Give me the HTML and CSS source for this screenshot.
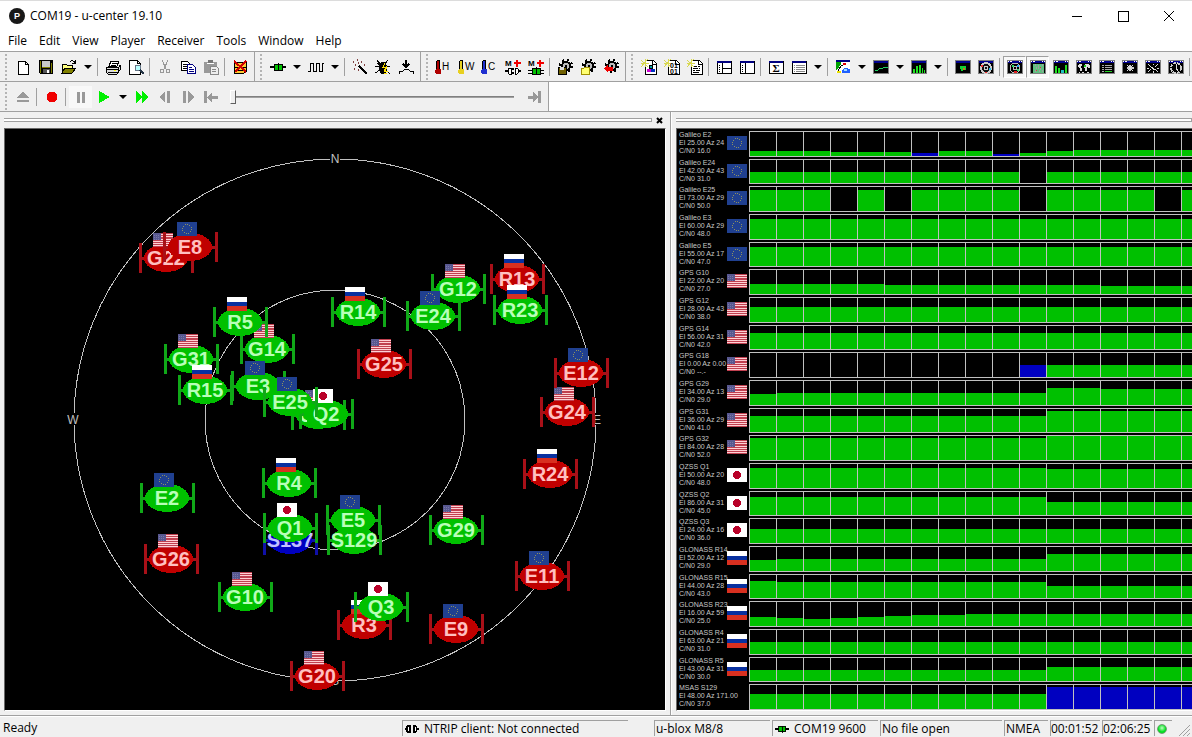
FILE: index.html
```html
<!DOCTYPE html>
<html lang="en">
<head>
  <meta charset="utf-8">
  <title>COM19 - u-center 19.10</title>
  <link rel="stylesheet" href="styles.css">
</head>
<body>
  <!-- icon and flag sprite -->
  <svg class="sprite" aria-hidden="true">
    <symbol id="new" viewBox="0 0 16 16"><path d="M3 2h7l3 3v10h-10z" fill="#fff" stroke="#000"/><path d="M10 2v3h3" fill="none" stroke="#000"/></symbol>
    <symbol id="save" viewBox="0 0 16 16"><path d="M1 1h14v14H2l-1-1z" fill="#000"/><path d="M2 2h1v12H2zM13 4h1v10h-1zM4 8h8v1H4z" fill="#808000"/><path d="M4 2h8v6H4z" fill="#c8c8c8"/><path d="M5 10h7v4H5z" fill="#555"/><path d="M9 11h2v3H9z" fill="#fff"/></symbol>
    <symbol id="open" viewBox="0 0 16 16"><path d="M1 14V5h4l1 1h5v3" fill="#ffff80" stroke="#000"/><path d="M1 14l3-5h11l-4 5z" fill="#808000" stroke="#000"/><path d="M9 3q3-3 5 1M14 1v3h-3" fill="none" stroke="#000"/></symbol>
    <symbol id="print" viewBox="0 0 16 16"><path d="M4 7l2-5h8l-2 5z" fill="#fff" stroke="#000"/><path d="M7 4h5M6 6h5" stroke="#000"/><path d="M1 8h13l1-2v5l-3 4H3l-2-2z" fill="#ddd" stroke="#000"/><path d="M1 10h12M3 13h9M13 8v5" stroke="#000"/><path d="M9 11h2v1H9z" fill="#ff0"/></symbol>
    <symbol id="preview" viewBox="0 0 16 16"><path d="M1 1h8l3 3v11H1z" fill="#fff" stroke="#000"/><path d="M9 1v3h3" fill="none" stroke="#000"/><circle cx="10" cy="9" r="3" fill="#bff" stroke="#678"/><path d="M12 11l4 4" stroke="#234" stroke-width="2"/></symbol>
    <symbol id="cut" viewBox="0 0 16 16"><path d="M5 1l4 9M11 1L7 10" stroke="#999" fill="none"/><circle cx="5" cy="12" r="2" fill="none" stroke="#999"/><circle cx="11" cy="12" r="2" fill="none" stroke="#999"/></symbol>
    <symbol id="copy" viewBox="0 0 16 16"><path d="M1 2h6l2 2v7H1z" fill="#fff" stroke="#000"/><path d="M3 5h4M3 7h4M3 9h4" stroke="#000"/><path d="M7 5h5l3 3v6H7z" fill="#fff" stroke="#000080"/><path d="M9 8h3M9 10h5M9 12h5" stroke="#000080"/></symbol>
    <symbol id="paste" viewBox="0 0 16 16"><path d="M1 3h13v11H1z" fill="#999"/><path d="M5 1h5v3H5z" fill="#777"/><path d="M4 4h7" stroke="#fff"/><path d="M7 7h6l2 2v6H7z" fill="#eee" stroke="#888"/><path d="M9 10h4M9 12h4" stroke="#888"/></symbol>
    <symbol id="clear" viewBox="0 0 16 16"><path d="M2 5l2-2h10v10l-2 1H2z" fill="#ffc830" stroke="#000"/><path d="M2 8h12M2 11h12" stroke="#000"/><path d="M2 2l12 11M14 2L3 13" stroke="#d00000" stroke-width="2"/></symbol>
    <symbol id="plug" viewBox="0 0 16 16"><path d="M0 8h16" stroke="#000" stroke-width="2"/><rect x="4" y="5" width="8" height="6" fill="#00c000" stroke="#000"/><path d="M8 4v8" stroke="#000"/></symbol>
    <symbol id="wave" viewBox="0 0 16 16"><path d="M0 12h2V4h3v8h3V4h3v8h3V4h2" fill="none" stroke="#000"/></symbol>
    <symbol id="wand" viewBox="0 0 16 16"><path d="M7 7l8 8" stroke="#000" stroke-width="2"/><path d="M1 3h1M5 1h1M9 3h1M3 6h1M2 10h1M6 11h1M12 6h1M6 4h1" stroke="#804040" stroke-width="2"/></symbol>
    <symbol id="bug" viewBox="0 0 16 16"><path d="M2 1l3 4M13 1l-3 4M0 7h5M0 14l5-3M15 15l-4-4M15 7h-4M2 4l4 3" stroke="#000"/><ellipse cx="8" cy="9" rx="4" ry="6" fill="#000"/><path d="M10 4l-2 4h3l-2 4M12 7l-2 5h3M9 14h3" stroke="#ffe000" stroke-width="1" fill="none"/></symbol>
    <symbol id="download" viewBox="0 0 16 16"><path d="M8 1v7M5 5l3 3 3-3" stroke="#000" stroke-width="2" fill="none"/><path d="M1 15v-3h4l2-2h3l2 2h3v3" fill="none" stroke="#000"/></symbol>
    <symbol id="thermo" viewBox="0 0 8 16"><path d="M2 2l1-1h2l1 1v10H2z" fill="#000"/><path d="M3 2h2v10H3z" fill="currentColor"/><path d="M2 10h4l1 1v3l-1 1H2l-1-1v-3z" fill="currentColor"/></symbol>
    <symbol id="plugs" viewBox="0 0 16 16"><path d="M0 12h3M13 12h3M6 10h3M6 14h3" stroke="#000" stroke-width="2"/><path d="M6 9H4L3 10v4l1 1h2zM10 9h2l1 1v4l-1 1h-2z" fill="#fff" stroke="#000"/><path d="M9 4h7M12 1v7" stroke="#f00000" stroke-width="2"/></symbol>
    <symbol id="plugs-on" viewBox="0 0 16 16"><path d="M0 11h16M0 14h16" stroke="#000"/><rect x="4" y="9" width="8" height="6" fill="#00c000" stroke="#000"/><path d="M8 8v8" stroke="#000"/><path d="M9 4h7M12 1v7" stroke="#f00000" stroke-width="2"/></symbol>
    <symbol id="gear" viewBox="0 0 16 16"><circle cx="9" cy="7" r="6" fill="none" stroke="#000" stroke-width="2" stroke-dasharray="2 2.7"/><circle cx="9" cy="7" r="4" fill="#bbb" stroke="#000" stroke-width="2"/><circle cx="9" cy="7" r="1" fill="#fff" stroke="#000"/></symbol>
    <symbol id="g-save" viewBox="0 0 16 16"><use href="#gear"/><path d="M1 8h8v7H1z" fill="#706000" stroke="#000"/><path d="M3 8h4v3H3z" fill="#ddd"/></symbol>
    <symbol id="g-open" viewBox="0 0 16 16"><use href="#gear"/><path d="M1 9h3l1-1h4v7H1z" fill="#ffff70" stroke="#a09000"/></symbol>
    <symbol id="g-back" viewBox="0 0 16 16"><use href="#gear"/><path d="M1 9l4-4v3h5v4H5v2z" fill="#f00000"/></symbol>
    <symbol id="page" viewBox="0 0 16 16"><path d="M4 1h8l3 3v11H4z" fill="#fff" stroke="#000"/><path d="M11 1v4h4" fill="none" stroke="#000"/><path d="M0 1l7 7M7 0L0 8M4 0v8M0 4h8" stroke="#d8d850"/></symbol>
    <symbol id="p-config" viewBox="0 0 16 16"><use href="#page"/><path d="M8 6h3v3H8z" fill="#00a0a0" stroke="#000"/><path d="M6 10h4v3H6z" fill="#d000d0"/><path d="M10 10h4v3h-4z" fill="#0030c0"/></symbol>
    <symbol id="p-text" viewBox="0 0 16 16"><use href="#page"/><path d="M7 7h3M11 7h2M6 9h5M12 9h1M6 11h2M9 11h4M6 13h6" stroke="#000"/></symbol>
    <symbol id="blank" viewBox="0 0 16 16"><path d="M1 2h14v12H1z" fill="#fff" stroke="#000"/><path d="M1 2h14v2H1z" fill="#000080"/></symbol>
    <symbol id="side" viewBox="0 0 16 16"><use href="#blank"/><path d="M6 4v10M3 6h1M3 8h1M3 10h1M3 12h1" stroke="#000"/></symbol>
    <symbol id="split" viewBox="0 0 16 16"><use href="#side"/><path d="M6 9h9" stroke="#000"/></symbol>
    <symbol id="list" viewBox="0 0 16 16"><use href="#blank"/><path d="M3 6h1M5 6h9M3 8h1M5 8h9M3 10h1M5 10h9M3 12h1M5 12h9" stroke="#888"/></symbol>
    <symbol id="map" viewBox="0 0 16 16"><path d="M1 2h14v12H1z" fill="#fff"/><path d="M1 2h5v3l-4 6H1z" fill="#00a000"/><path d="M7 14q0-5 3-5l5 1v4z" fill="#2060ff"/><path d="M9 10h3v2H9z" fill="#a0e0ff"/><path d="M3 12q3-7 8-7" fill="none" stroke="#000"/><path d="M8 4h3v2H8z" fill="#e00000"/><path d="M2 12h4v2H2z" fill="#e8e000"/><path d="M1 1h14v2H1z" fill="#000080"/></symbol>
    <symbol id="win" viewBox="0 0 16 16"><path d="M0 1h16v14H0z" fill="#808080"/><path d="M1 2h14v12H1z" fill="#000"/><path d="M1 2h14v2H1z" fill="#000090"/></symbol>
    <symbol id="line" viewBox="0 0 16 16"><use href="#win"/><path d="M2 11h3l2-2 2 1 2-2h4" stroke="#20d060" fill="none"/></symbol>
    <symbol id="bars" viewBox="0 0 16 16"><use href="#win"/><path d="M2 10h2v4H2zM5 7h2v7H5zM8 6h2v8H8zM11 9h1v5h-1zM13 11h1v3h-1z" fill="#20e020"/></symbol>
    <symbol id="dot" viewBox="0 0 16 16"><use href="#win"/><path d="M5 7h6v4H8v1H6z" fill="#10d030"/><path d="M8 9h2v2H8z" fill="#d07020"/></symbol>
    <symbol id="target" viewBox="0 0 16 16"><use href="#win"/><circle cx="8" cy="9" r="5" fill="#111" stroke="#ccc" stroke-width="2"/><circle cx="8" cy="9" r="2" fill="none" stroke="#ccc"/><path d="M3 6h2v2H3zM7 13h2v1H7z" fill="#f03030"/><path d="M11 9h2v2h-2z" fill="#20c0f0"/></symbol>
    <symbol id="view" viewBox="0 0 16 16"><use href="#win"/><path d="M1 2h1v1H1zM3 2h2v1H3zM12 2h1v1h-1zM14 2h1v1h-1z" fill="#fff"/></symbol>
    <symbol id="v-sky" viewBox="0 0 16 16"><use href="#view"/><circle cx="8" cy="9" r="5" fill="none" stroke="#bbb"/><circle cx="8" cy="9" r="2" fill="none" stroke="#bbb"/><path d="M5 6h2v2H5zM10 10h2v2h-2z" fill="#20e060"/><path d="M7 12h3v2H7z" fill="#e02020"/><path d="M10 6h2v2h-2z" fill="#20a0f0"/></symbol>
    <symbol id="v-hist" viewBox="0 0 16 16"><use href="#view"/><path d="M3 5h11v9H3z" fill="#60c080"/><path d="M5 6h1M8 7h1M12 6h1M6 9h1M10 10h1M5 12h1M9 12h1M12 12h1M8 9h1" stroke="#a0a0a0" stroke-width="2"/><path d="M10 8h1v1h-1zM6 11h1v1H6z" fill="#d04040"/></symbol>
    <symbol id="v-bars" viewBox="0 0 16 16"><use href="#view"/><path d="M2 7h2v7H2zM5 9h2v5H5zM12 6h2v8h-2z" fill="#20e020"/><path d="M8 11h3v3H8z" fill="#20c0c0"/></symbol>
    <symbol id="v-world" viewBox="0 0 16 16"><use href="#view"/><path d="M2 6h1V5h3v2H5v2h1v3H4V9H3V8H2zM8 6h1V5h4v1h1v3h-2V8h-1v4H9V9H8z" fill="#ddd"/><path d="M8 6h2v2H8z" fill="#20d020"/><path d="M3 13h1M6 13h2M11 13h2" stroke="#ddd"/></symbol>
    <symbol id="v-text" viewBox="0 0 16 16"><use href="#view"/><path d="M3 6h2M6 6h7M3 8h2M6 8h7M3 10h2M6 10h7M3 12h2" stroke="#aaa"/><path d="M6 12h7" stroke="#20d020"/></symbol>
    <symbol id="v-compass" viewBox="0 0 16 16"><use href="#view"/><path d="M8 4l1 4 5 1-5 1-1 4-1-4-5-1 5-1z" fill="#ccc"/><path d="M5 6l6 6M11 6l-6 6" stroke="#ddd"/></symbol>
    <symbol id="v-dev" viewBox="0 0 16 16"><use href="#view"/><path d="M3 5l3 3M13 5l-3 3M3 13l3-3M13 13l-3-3M8 5v1M8 12v2M2 9h2M12 9h2M6 8l4 3" stroke="#ddd"/></symbol>
    <symbol id="v-clock" viewBox="0 0 16 16"><use href="#view"/><circle cx="8" cy="9" r="5" fill="none" stroke="#ccc" stroke-width="2" stroke-dasharray="3 1"/><path d="M8 5v4l2 3" stroke="#ddd" fill="none"/></symbol>
    <symbol id="eject" viewBox="0 0 16 16"><path d="M8 2l6 7H2zM2 11h12v2H2z" fill="#999"/></symbol>
    <symbol id="record" viewBox="0 0 16 16"><circle cx="8" cy="8" r="5.5" fill="#f00000"/></symbol>
    <symbol id="pause" viewBox="0 0 16 16"><path d="M4 3h3v11H4zM9 3h3v11H9z" fill="#999"/></symbol>
    <symbol id="play" viewBox="0 0 16 16"><path d="M3 2l11 6-11 6z" fill="#00f000"/></symbol>
    <symbol id="ff" viewBox="0 0 16 16"><path d="M2 2l6 6-6 6zM8 2l6 6-6 6z" fill="#00f000"/></symbol>
    <symbol id="step-back" viewBox="0 0 16 16"><path d="M8 2v12L2 8zM10 2h3v12h-3z" fill="#999"/></symbol>
    <symbol id="step" viewBox="0 0 16 16"><path d="M3 2h3v12H3zM8 2l6 6-6 6z" fill="#999"/></symbol>
    <symbol id="first" viewBox="0 0 16 16"><path d="M1 2h3v12H1zM4 8l5-5v4h6v3H9v4z" fill="#999"/></symbol>
    <symbol id="last" viewBox="0 0 16 16"><path d="M12 2h3v12h-3zM12 8L7 3v4H2v3h5v4z" fill="#999"/></symbol>
    <symbol id="unplug" viewBox="0 0 16 16"><path d="M0 8h3M13 8h3M5 6h2M5 10h2" stroke="#000" stroke-width="2"/><path d="M6 4H4L2 6v4l2 2h2zM10 4h2l1 2v4l-1 2h-2z" fill="#fff" stroke="#000" stroke-width="2"/></symbol>
    <symbol id="us" viewBox="0 0 20 14"><path d="M0 0h20v14H0z" fill="#ffd0d4"/><path d="M0 0h20v1H0zM0 2h20v1H0zM0 4h20v2H0zM0 7h20v1H0zM0 9h20v1H0zM0 11h20v1H0zM0 13h20v1H0z" fill="#c04050"/><path d="M0 0h8v7H0z" fill="#585890"/><path d="M1 2h6M1 4h6M1 6h6" stroke="#7878a8" stroke-dasharray="1 1"/></symbol>
    <symbol id="eu" viewBox="0 0 20 14"><path d="M0 0h20v14H0z" fill="#204090"/><circle cx="10" cy="7" r="4.5" fill="none" stroke="#8c9060" stroke-dasharray="1 1.3"/></symbol>
    <symbol id="ru" viewBox="0 0 20 14"><path d="M0 0h20v5H0z" fill="#fff"/><path d="M0 5h20v5H0z" fill="#0830a0"/><path d="M0 9h20v5H0z" fill="#d83020"/></symbol>
    <symbol id="jp" viewBox="0 0 20 14"><path d="M0 0h20v14H0z" fill="#fff"/><circle cx="10" cy="7" r="4" fill="#b80028"/></symbol>
  </svg>

  <header class="titlebar">
    <svg class="logo" viewBox="0 0 16 16"><circle cx="8" cy="8" r="8" fill="#181818"/><text x="8" y="11" text-anchor="middle">P</text></svg>
    <span class="title">COM19 - u-center 19.10</span>
    <button class="win-btn" aria-label="Minimize"><svg viewBox="0 0 12 12"><path d="M1 6h10"/></svg></button>
    <button class="win-btn" aria-label="Maximize"><svg viewBox="0 0 12 12"><path d="M1 1h10v10H1z"/></svg></button>
    <button class="win-btn" aria-label="Close"><svg class="smooth" viewBox="0 0 12 12"><path d="M1 1l10 10M11 1L1 11"/></svg></button>
  </header>

  <nav class="menubar">
    <a href="#">File</a><a href="#">Edit</a><a href="#">View</a><a href="#">Player</a><a href="#">Receiver</a><a href="#">Tools</a><a href="#">Window</a><a href="#">Help</a>
  </nav>

  <div class="toolbars">
    <div class="band">
      <button class="tool" aria-label="New"><svg><use href="#new"/></svg></button>
      <button class="tool" aria-label="Save"><svg><use href="#save"/></svg></button>
      <button class="tool" aria-label="Open"><svg><use href="#open"/></svg></button>
      <button class="drop" aria-label="Open recent"></button>
      <span class="sep"></span>
      <button class="tool" aria-label="Print"><svg><use href="#print"/></svg></button>
      <button class="tool" aria-label="Print preview"><svg><use href="#preview"/></svg></button>
      <span class="sep"></span>
      <button class="tool" aria-label="Cut"><svg><use href="#cut"/></svg></button>
      <button class="tool" aria-label="Copy"><svg><use href="#copy"/></svg></button>
      <button class="tool" aria-label="Paste"><svg><use href="#paste"/></svg></button>
      <span class="sep"></span>
      <button class="tool" aria-label="Clear"><svg><use href="#clear"/></svg></button>
    </div>
    <div class="band">
      <button class="tool" aria-label="Connect"><svg><use href="#plug"/></svg></button>
      <button class="drop" aria-label="Port"></button>
      <button class="tool" aria-label="Baudrate"><svg><use href="#wave"/></svg></button>
      <button class="drop" aria-label="Select baudrate"></button>
      <span class="sep"></span>
      <button class="tool" aria-label="Autobauding"><svg><use href="#wand"/></svg></button>
      <button class="tool" aria-label="Debug messages"><svg><use href="#bug"/></svg></button>
      <button class="tool" aria-label="Firmware update"><svg><use href="#download"/></svg></button>
    </div>
    <div class="band">
      <button class="tool thermo hot" aria-label="Hotstart"><svg><use href="#thermo"/></svg>H</button>
      <button class="tool thermo warm" aria-label="Warmstart"><svg><use href="#thermo"/></svg>W</button>
      <button class="tool thermo cold" aria-label="Coldstart"><svg><use href="#thermo"/></svg>C</button>
      <button class="tool" aria-label="Multi GNSS"><svg viewBox="0 0 16 16"><use href="#plugs"/><text class="mark" x="0" y="7">M</text></svg></button>
      <button class="tool" aria-label="Multi GNSS connect"><svg viewBox="0 0 16 16"><use href="#plugs-on"/><text class="mark" x="0" y="7">M</text></svg></button>
      <span class="sep"></span>
      <button class="tool" aria-label="Save config"><svg><use href="#g-save"/></svg></button>
      <button class="tool" aria-label="Load config"><svg><use href="#g-open"/></svg></button>
      <button class="tool" aria-label="Revert config"><svg><use href="#g-back"/></svg></button>
    </div>
    <div class="band fill">
      <button class="tool" aria-label="Packet console"><svg><use href="#p-config"/></svg></button>
      <button class="tool" aria-label="Binary console"><svg viewBox="0 0 16 16"><use href="#page"/><text class="bits" x="6" y="9">01</text><text class="bits" x="6" y="15">01</text></svg></button>
      <button class="tool" aria-label="Text console"><svg><use href="#p-text"/></svg></button>
      <span class="sep"></span>
      <button class="tool" aria-label="Messages view"><svg><use href="#split"/></svg></button>
      <button class="tool" aria-label="Configuration view"><svg><use href="#side"/></svg></button>
      <span class="sep"></span>
      <button class="tool" aria-label="Statistic view"><svg viewBox="0 0 16 16"><use href="#blank"/><text class="sigma" x="8" y="13" text-anchor="middle">Σ</text></svg></button>
      <button class="tool" aria-label="Table view"><svg><use href="#list"/></svg></button>
      <button class="drop" aria-label="Table list"></button>
      <span class="sep"></span>
      <button class="tool" aria-label="Map view"><svg><use href="#map"/></svg></button>
      <button class="drop" aria-label="Map list"></button>
      <button class="tool" aria-label="Chart view"><svg><use href="#line"/></svg></button>
      <button class="drop" aria-label="Chart list"></button>
      <button class="tool" aria-label="Histogram view"><svg><use href="#bars"/></svg></button>
      <button class="drop" aria-label="Histogram list"></button>
      <span class="sep"></span>
      <button class="tool" aria-label="Camera view"><svg><use href="#dot"/></svg></button>
      <button class="tool" aria-label="Deviation map"><svg><use href="#target"/></svg></button>
      <span class="sep"></span>
      <button class="tool pressed" aria-label="Satellite position"><svg><use href="#v-sky"/></svg></button>
      <button class="tool pressed" aria-label="Satellite level history"><svg><use href="#v-hist"/></svg></button>
      <button class="tool" aria-label="Satellite level"><svg><use href="#v-bars"/></svg></button>
      <button class="tool" aria-label="World position"><svg><use href="#v-world"/></svg></button>
      <button class="tool" aria-label="Data"><svg><use href="#v-text"/></svg></button>
      <button class="tool" aria-label="Compass"><svg><use href="#v-compass"/></svg></button>
      <button class="tool" aria-label="Deviation"><svg><use href="#v-dev"/></svg></button>
      <button class="tool" aria-label="Clock"><svg><use href="#v-clock"/></svg></button>
      <span class="sep"></span>
    </div>
  </div>

  <div class="toolbars player">
    <div class="band">
      <button class="tool" aria-label="Eject"><svg><use href="#eject"/></svg></button>
      <span class="sep"></span>
      <button class="tool" aria-label="Record"><svg><use href="#record"/></svg></button>
      <span class="sep"></span>
      <button class="tool paused" aria-label="Pause"><svg><use href="#pause"/></svg></button>
      <button class="tool" aria-label="Play"><svg><use href="#play"/></svg></button>
      <button class="drop" aria-label="Play speed"></button>
      <button class="tool" aria-label="Fast forward"><svg><use href="#ff"/></svg></button>
      <button class="tool" aria-label="Step back"><svg><use href="#step-back"/></svg></button>
      <button class="tool" aria-label="Step forward"><svg><use href="#step"/></svg></button>
      <button class="tool" aria-label="Go to start"><svg><use href="#first"/></svg></button>
      <input class="seek" type="range" min="0" max="100" value="0" aria-label="Position">
      <button class="tool" aria-label="Go to end"><svg><use href="#last"/></svg></button>
    </div>
  </div>

  <main class="docks">
    <section class="dock">
      <div class="grip"><span class="grip-bar"></span><button class="close" aria-label="Close view"><svg viewBox="0 0 7 7"><path d="M1 1l5 5M6 1L1 6"/></svg></button></div>
      <div class="view">
        <svg class="sky" viewBox="0 0 660 581">
          <g class="rings">
            <circle cx="330" cy="291" r="261"/>
            <circle cx="330" cy="291" r="130"/>
          </g>
          <g class="compass">
            <path d="M325 24h10v12h-10zM62 284h12v12H62zM588 284h8v12h-8z"/>
            <text x="330" y="34">N</text>
            <text x="68" y="295">W</text>
            <text x="592" y="295">E</text>
            <text x="330" y="556">S</text>
          </g>
          <g id="satellites"></g>
        </svg>
      </div>
    </section>
    <section class="dock">
      <div class="grip"><span class="grip-bar"></span></div>
      <div class="view history" id="history"></div>
    </section>
  </main>

  <footer class="statusbar">
    <span class="ready">Ready</span>
    <span class="pane ntrip"><svg><use href="#unplug"/></svg>NTRIP client: Not connected</span>
    <span class="pane receiver">u-blox M8/8</span>
    <span class="pane port"><svg><use href="#plug"/></svg>COM19 9600</span>
    <span class="pane file">No file open</span>
    <span class="pane proto">NMEA</span>
    <span class="pane time">00:01:52</span>
    <span class="pane time">02:06:25</span>
    <span class="pane led"><i></i></span>
    <svg class="resize" viewBox="0 0 12 12"><path d="M1 12L12 1M5 12l7-7M9 12l3-3"/></svg>
  </footer>

  <script src="script.js"></script>
</body>
</html>
```

FILE: styles.css
```css
* {
  box-sizing: border-box;
}
html, body {
  height: 100%;
}
body {
  margin: 0;
  display: flex;
  flex-direction: column;
  overflow: hidden;
  background: #f0f0f0;
  color: #000;
  font: 12px/16px "Open Sans", "Noto Sans", sans-serif;
}
button {
  padding: 0;
  border: 0;
  background: none;
  font: inherit;
  color: inherit;
}
svg {
  display: block;
  shape-rendering: crispEdges;
}
.sprite {
  position: absolute;
  width: 0;
  height: 0;
}

/* title and menu */
.titlebar {
  display: flex;
  align-items: center;
  height: 31px;
  padding-left: 9px;
  background: #fff;
  border-top: 1px solid #dcdcdc;
}
.logo {
  width: 16px;
  height: 16px;
  shape-rendering: auto;
}
.logo text {
  fill: #fff;
  font: bold 9px "Liberation Sans", sans-serif;
}
.title {
  flex: 1;
  margin-left: 5px;
}
.win-btn {
  width: 46px;
  height: 30px;
  display: flex;
  align-items: center;
  justify-content: center;
}
.win-btn svg {
  width: 12px;
  height: 12px;
  fill: none;
  stroke: #000;
}
.win-btn .smooth {
  shape-rendering: auto;
}
.menubar {
  display: flex;
  gap: 12px;
  height: 20px;
  padding: 2px 8px;
  background: #fff;
}
.menubar a {
  color: #000;
  text-decoration: none;
}

/* toolbars */
.toolbars {
  display: flex;
  height: 30px;
  border-top: 1px solid #a0a0a0;
  background: #fff;
}
.band {
  flex: none;
  display: flex;
  align-items: center;
  padding: 0 3px 0 11px;
  border-right: 1px solid #a0a0a0;
  background: linear-gradient(#b4b4b4 50%, transparent 50%) 5px 6px / 2px 4px repeat-y, #f0f0f0;
}
.band.fill {
  flex: 1 0 0;
  min-width: 0;
  overflow: hidden;
  border-right: 0;
}
.tool {
  flex: none;
  width: 23px;
  height: 22px;
  display: flex;
  align-items: center;
  justify-content: center;
}
.tool svg {
  flex: none;
  width: 16px;
  height: 16px;
}
.pressed {
  background: #f8f8f8;
  border: 1px solid #a0a0a0;
  border-right-color: #fff;
  border-bottom-color: #fff;
}
.paused {
  background: #f8f8f8;
}
.thermo {
  justify-content: flex-start;
  font: 10px/16px "Liberation Sans", sans-serif;
}
.tool.thermo svg {
  width: 8px;
  margin-left: 2px;
}
.hot svg {
  color: #b00000;
}
.warm svg {
  color: #e8d020;
}
.cold svg {
  color: #2030d0;
}
.mark {
  font: bold 8px "Liberation Sans", sans-serif;
}
.bits {
  font: bold 7px "Liberation Sans", sans-serif;
}
.sigma {
  font: bold 11px "Liberation Serif", serif;
}
.drop {
  flex: none;
  width: 15px;
  height: 22px;
  display: flex;
  align-items: center;
  justify-content: center;
}
.drop::before {
  content: "";
  border: 4px solid transparent;
  border-top-color: #000;
  border-bottom: 0;
}
.sep {
  flex: none;
  width: 6px;
  height: 18px;
  background: linear-gradient(#a0a0a0, #a0a0a0) 2px 0 / 1px 100% no-repeat;
}
.seek {
  appearance: none;
  width: 300px;
  height: 16px;
  margin: 0;
  padding: 0 8px;
  background: none;
}
.seek::-webkit-slider-runnable-track {
  height: 2px;
  background: #808080;
  border-bottom: 1px solid #a0a0a0;
}
.seek::-webkit-slider-thumb {
  appearance: none;
  width: 6px;
  height: 14px;
  margin-top: -6px;
  background: #f0f0f0;
  border: 1px solid #fff;
  border-right-color: #606060;
  border-bottom-color: #606060;
}

/* docked views */
.docks {
  flex: 1;
  min-height: 0;
  display: grid;
  grid-template-columns: minmax(0, 671fr) minmax(0, 521fr);
  border-top: 1px solid #a0a0a0;
}
.dock {
  display: flex;
  flex-direction: column;
  min-height: 0;
  padding: 0 4px 4px;
  border-right: 1px solid #a0a0a0;
}
.dock + .dock {
  padding-right: 0;
  border-right: 0;
  border-left: 1px solid #fff;
}
.grip {
  flex: none;
  display: flex;
  align-items: center;
  height: 16px;
}
.grip-bar {
  flex: 1;
  height: 4px;
  border: 1px solid #a0a0a0;
  border-left: 0;
  background: #fff;
}
.close {
  width: 14px;
  height: 12px;
  display: flex;
  align-items: center;
  justify-content: center;
}
.close svg {
  width: 7px;
  height: 7px;
  stroke: #000;
  stroke-width: 2;
  shape-rendering: auto;
}
.view {
  flex: 1;
  min-height: 0;
  background: #000;
  border: 1px solid #fff;
  border-top-color: #696969;
  border-left-color: #696969;
}

/* sky plot */
.sky {
  width: 100%;
  height: 100%;
}
.rings {
  fill: none;
  stroke: #c0c0c0;
}
.compass path {
  fill: #000;
}
.compass text {
  fill: #c0c0c0;
  font: 12px "Liberation Sans", sans-serif;
  text-anchor: middle;
}
.sat path {
  stroke-width: 3;
  fill: none;
}
.sat text {
  font: bold 20px "Liberation Sans", sans-serif;
  text-anchor: middle;
}
.used {
  fill: #00c000;
  stroke: #10a818;
}
.unused {
  fill: #c00000;
  stroke: #a81018;
}
.tracked {
  fill: #0000c0;
  stroke: #1010a8;
}
.sat ellipse, .sat text {
  stroke: none;
}
.used text {
  fill: #b8ffb8;
}
.unused text {
  fill: #ffc0c0;
}
.tracked text {
  fill: #c0c0ff;
}

/* signal history */
.history {
  display: flex;
  flex-direction: column;
  overflow: hidden;
  border-right: 0;
}
.signal {
  flex: 1;
  min-height: 0;
  display: flex;
  padding: 2px 0 0 2px;
}
.info {
  position: relative;
  flex: none;
  width: 70px;
  margin: 0;
  color: #c8c8c8;
  font: 7px/8px "Liberation Sans", sans-serif;
  white-space: nowrap;
}
.info span {
  display: block;
}
.info svg {
  position: absolute;
  right: 2px;
  top: 5px;
  width: 20px;
  height: 14px;
}
.levels {
  flex: 1;
  min-width: 0;
  display: flex;
  overflow: hidden;
  border: 1px solid #c0c0c0;
  border-width: 1px 0;
}
.level {
  flex: none;
  width: 27px;
  display: flex;
  align-items: flex-end;
  border-left: 1px solid #c0c0c0;
}
.bar {
  flex: 1;
  background: #00c000;
}
.bar.blue {
  background: #0000c0;
}

/* status bar */
.statusbar {
  flex: none;
  display: flex;
  align-items: stretch;
  gap: 2px;
  height: 22px;
  padding: 4px 2px 1px 3px;
  border-top: 1px solid #a0a0a0;
  box-shadow: inset 0 1px #fff;
}
.ready {
  flex: 1;
}
.pane {
  flex: none;
  display: flex;
  align-items: center;
  padding-left: 1px;
  border-top: 1px solid #a0a0a0;
  border-left: 1px solid #a0a0a0;
  white-space: nowrap;
}
.pane svg {
  flex: none;
  width: 16px;
  height: 14px;
  margin-right: 4px;
}
.ntrip {
  width: 226px;
  margin-right: 24px;
}
.receiver {
  width: 116px;
}
.port {
  width: 106px;
}
.file {
  width: 122px;
}
.proto {
  width: 44px;
}
.time {
  width: 50px;
  padding-left: 0;
}
.led {
  width: 18px;
  padding-left: 2px;
}
.led i {
  width: 10px;
  height: 10px;
  border-radius: 50%;
  border: 1px solid #70a070;
  background: radial-gradient(circle at 4px 3px, #c0ffc0, #00e020 60%);
}
.resize {
  align-self: flex-end;
  width: 12px;
  height: 12px;
  margin-left: 4px;
  stroke: #a0a0a0;
  shape-rendering: auto;
}
```

FILE: script.js
```js
// name, x, y, state - later entries are drawn on top
var satellites = [
  ["S129", 349, 411, "used"],
  ["S137", 285, 411, "tracked"],
  ["G10", 240, 468, "used"],
  ["G12", 453, 160, "used"],
  ["G14", 262, 220, "used"],
  ["G20", 312, 547, "unused"],
  ["G22", 161, 129, "unused"],
  ["G24", 562, 283, "unused"],
  ["G25", 379, 235, "unused"],
  ["G26", 166, 430, "unused"],
  ["G29", 451, 401, "used"],
  ["G31", 186, 230, "used"],
  ["G32", 313, 286, "used"],
  ["R3", 359, 496, "unused"],
  ["R4", 284, 354, "used"],
  ["R5", 235, 193, "used"],
  ["R13", 512, 150, "unused"],
  ["R14", 353, 183, "used"],
  ["R15", 200, 261, "used"],
  ["R23", 515, 181, "used"],
  ["R24", 545, 345, "unused"],
  ["Q1", 285, 399, "used"],
  ["Q2", 321, 285, "used"],
  ["Q3", 376, 478, "used"],
  ["E2", 162, 369, "used"],
  ["E3", 253, 257, "used"],
  ["E5", 348, 391, "used"],
  ["E8", 185, 118, "unused"],
  ["E9", 451, 500, "unused"],
  ["E11", 537, 447, "unused"],
  ["E12", 576, 244, "unused"],
  ["E24", 428, 187, "used"],
  ["E25", 285, 273, "used"]
];

// name, elevation/azimuth, C/N0, runs of [columns, level, blue]
var signals = [
  ["Galileo E2", "El 25.00 Az 24", "16.0", [[3, 5], [3, 4], [1, 3, 1], [2, 5], [1, 2, 1], [1, 3], [1, 5], [5, 6]]],
  ["Galileo E24", "El 42.00 Az 43", "31.0", [[10, 12], [1, 0], [6, 12]]],
  ["Galileo E25", "El 73.00 Az 29", "50.0", [[3, 21], [1, 0], [1, 21], [1, 0], [4, 21], [1, 0], [4, 21], [1, 0], [1, 21]]],
  ["Galileo E3", "El 60.00 Az 29", "48.0", [[17, 20]]],
  ["Galileo E5", "El 55.00 Az 17", "47.0", [[17, 20]]],
  ["GPS G10", "El 22.00 Az 20", "27.0", [[5, 10], [8, 9], [4, 8]]],
  ["GPS G12", "El 28.00 Az 43", "38.0", [[17, 15]]],
  ["GPS G14", "El 56.00 Az 31", "42.0", [[17, 17]]],
  ["GPS G18", "El 0.00 Az 0.00", "--.-", [[10, 0], [1, 12, 1], [6, 12]]],
  ["GPS G29", "El 34.00 Az 13", "29.0", [[1, 11], [10, 12], [2, 17], [4, 16]]],
  ["GPS G31", "El 36.00 Az 29", "41.0", [[11, 17], [6, 22]]],
  ["GPS G32", "El 84.00 Az 28", "52.0", [[11, 22], [6, 24]]],
  ["QZSS Q1", "El 50.00 Az 20", "48.0", [[11, 20], [6, 19]]],
  ["QZSS Q2", "El 86.00 Az 31", "45.0", [[11, 19], [6, 14]]],
  ["QZSS Q3", "El 24.00 Az 16", "36.0", [[17, 14]]],
  ["GLONASS R14", "El 52.00 Az 12", "29.0", [[1, 11], [10, 12], [6, 17]]],
  ["GLONASS R15", "El 44.00 Az 28", "43.0", [[1, 18], [10, 17], [6, 13]]],
  ["GLONASS R23", "El 16.00 Az 59", "25.0", [[1, 9], [1, 8], [1, 7], [1, 8], [1, 9], [1, 10], [2, 11], [9, 12]]],
  ["GLONASS R4", "El 63.00 Az 21", "31.0", [[17, 12]]],
  ["GLONASS R5", "El 43.00 Az 31", "30.0", [[11, 12], [6, 15]]],
  ["MSAS S129", "El 48.00 Az 171.00", "37.0", [[11, 15], [6, 22, 1]]]
];

var flags = { G: "us", E: "eu", R: "ru", Q: "jp" };

function drawSky() {
  var html = "";
  satellites.forEach(function (s) {
    var flag = flags[s[0][0]];
    html += '<g class="sat ' + s[3] + '" transform="translate(' + s[1] + ' ' + s[2] + ')">' +
      '<path d="M-26 -15v30M26 -15v30M-26 0h52"/><ellipse rx="22" ry="14"/>' +
      (flag ? '<use href="#' + flag + '" x="-13" y="-25" width="20" height="14" stroke="none"/>' : '') +
      '<text y="7">' + s[0] + '</text></g>';
  });
  document.getElementById("satellites").innerHTML = html;
}

function drawHistory() {
  var html = "";
  signals.forEach(function (s) {
    var flag = flags[s[0].split(" ")[1][0]];
    html += '<div class="signal"><p class="info"><span>' + s[0] + '</span><span>' + s[1] + '</span><span>C/N0 ' + s[2] + '</span>' +
      (flag ? '<svg><use href="#' + flag + '"/></svg>' : '') + '</p><div class="levels">';
    s[3].forEach(function (run) {
      for (var i = 0; i < run[0]; i++) {
        html += '<div class="level"><div class="bar' + (run[2] ? ' blue' : '') + '" style="height:' + Math.round(run[1] / 24 * 100) + '%"></div></div>';
      }
    });
    html += '</div></div>';
  });
  document.getElementById("history").innerHTML = html;
}

drawSky();
drawHistory();
```
